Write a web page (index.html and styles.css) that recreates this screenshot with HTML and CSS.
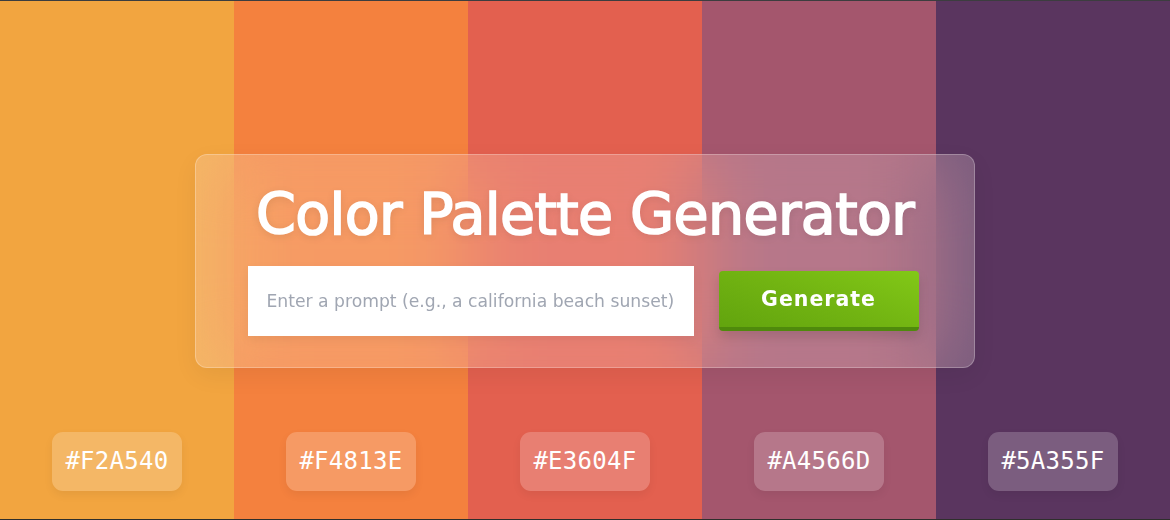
FILE: index.html
```html
<!DOCTYPE html>
<html lang="en">
<head>
<meta charset="utf-8">
<title>Color Palette Generator</title>
<link rel="stylesheet" href="styles.css">
</head>
<body>
<main class="page">
  <div class="palette">
    <div class="swatch" style="background:#F2A540"><span class="hex">#F2A540</span></div>
    <div class="swatch" style="background:#F4813E"><span class="hex">#F4813E</span></div>
    <div class="swatch" style="background:#E3604F"><span class="hex">#E3604F</span></div>
    <div class="swatch" style="background:#A4566D"><span class="hex">#A4566D</span></div>
    <div class="swatch" style="background:#5A355F"><span class="hex">#5A355F</span></div>
  </div>
  <section class="panel">
    <h1 class="title">Color Palette Generator</h1>
    <form class="form">
      <input class="prompt" type="text" placeholder="Enter a prompt (e.g., a california beach sunset)">
      <button class="btn" type="button">Generate</button>
    </form>
  </section>
</main>
</body>
</html>
```
FILE: styles.css
```css
* { box-sizing: border-box; }
html, body { margin: 0; padding: 0; }
body {
  width: 1170px;
  height: 520px;
  overflow: hidden;
  background: #3a3b3d;
  font-family: "DejaVu Sans", "Noto Sans", sans-serif;
}
.page {
  position: relative;
  height: 520px;
  border-top: 1px solid #3c3d3f;
  border-bottom: 1px solid #2e2f2c;
}
.palette {
  display: grid;
  grid-template-columns: repeat(5, 1fr);
  height: 100%;
}
.swatch {
  display: flex;
  align-items: flex-end;
  justify-content: center;
  padding-bottom: 28px;
}
.hex {
  font-family: "DejaVu Sans Mono", "Liberation Mono", monospace;
  font-size: 24px;
  line-height: 29px;
  color: #fff;
  padding: 15px 13px;
  border-radius: 11px;
  background: rgba(255, 255, 255, 0.2);
  box-shadow: 0 4px 10px rgba(0, 0, 0, 0.06);
  letter-spacing: 0.3px;
}
.panel {
  position: absolute;
  left: 195px;
  top: 153px;
  width: 780px;
  height: 214px;
  border-radius: 12px;
  background: rgba(255, 255, 255, 0.2);
  border: 1px solid rgba(255, 255, 255, 0.25);
  backdrop-filter: blur(40px);
  box-shadow: 0 8px 24px rgba(0, 0, 0, 0.06);
  display: flex;
  flex-direction: column;
  align-items: center;
  padding-top: 26px;
}
.title {
  margin: 0;
  color: #fff;
  font-weight: 400;
  font-size: 57px;
  line-height: 66px;
  letter-spacing: -0.6px;
  -webkit-text-stroke: 1.7px #fff;
  text-shadow: 0 2px 8px rgba(0, 0, 0, 0.12);
}
.form {
  display: flex;
  align-items: center;
  gap: 25px;
  margin-top: 19px;
  margin-left: -4px;
}
.prompt {
  width: 446px;
  height: 70px;
  border: none;
  outline: none;
  background: #fff;
  padding: 0 19px;
  font-family: "DejaVu Sans", sans-serif;
  font-size: 17.2px;
  color: #333;
  box-shadow: 0 4px 10px rgba(0, 0, 0, 0.06);
}
.prompt::placeholder { color: #a0a6b2; }
.btn {
  width: 200px;
  height: 60px;
  border: none;
  border-bottom: 4px solid #4f8a0c;
  border-radius: 4px;
  background: linear-gradient(20deg, #62a40e 0%, #72b412 50%, #82c817 100%);
  color: #fff;
  font-family: "DejaVu Sans", sans-serif;
  font-weight: 700;
  font-size: 20.5px;
  letter-spacing: 1px;
  padding: 0;
  box-shadow: 0 6px 12px rgba(0, 0, 0, 0.12);
}
```
